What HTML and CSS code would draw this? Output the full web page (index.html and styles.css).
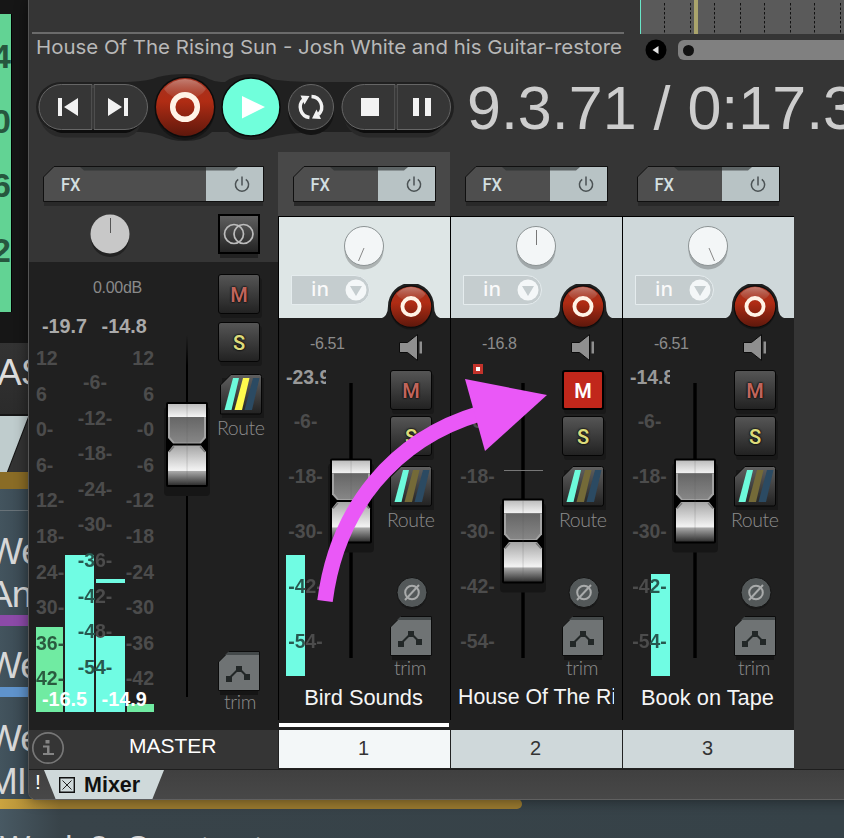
FILE: index.html
```html
<!DOCTYPE html>
<html lang="en">
<head>
<meta charset="utf-8">
<title>Mixer</title>
<link rel="stylesheet" href="styles.css">
</head>
<body>
<svg class="defs" width="0" height="0" aria-hidden="true">
  <defs>
    <linearGradient id="gRed" x1="0" y1="0" x2="0" y2="1"><stop offset="0" stop-color="#a33422"/><stop offset=".4" stop-color="#b02c14"/><stop offset="1" stop-color="#5e180c"/></linearGradient>
    <linearGradient id="gGloss" x1="0" y1="0" x2="0" y2="1"><stop offset="0" stop-color="#c98b80"/><stop offset="1" stop-color="#b05a48" stop-opacity=".3"/></linearGradient>
    <linearGradient id="gBtn" x1="0" y1="0" x2="0" y2="1"><stop offset="0" stop-color="#606060"/><stop offset="1" stop-color="#222"/></linearGradient>
    <linearGradient id="gCapTop" x1="0" y1="0" x2="0" y2="1"><stop offset="0" stop-color="#bdbdbd"/><stop offset="1" stop-color="#f4f4f4"/></linearGradient>
    <linearGradient id="gCapLow" x1="0" y1="0" x2="0" y2="1"><stop offset="0" stop-color="#a5a5a5"/><stop offset=".6" stop-color="#f0f0f0"/><stop offset=".64" stop-color="#f0f0f0"/><stop offset=".65" stop-color="#aaa"/><stop offset="1" stop-color="#303030"/></linearGradient>
    <linearGradient id="gMid" x1="0" y1="0" x2="0" y2="1"><stop offset="0" stop-color="#666"/><stop offset="1" stop-color="#868686"/></linearGradient>
    <linearGradient id="gTrack" x1="0" y1="335" x2="0" y2="365" gradientUnits="userSpaceOnUse"><stop offset="0" stop-color="#000" stop-opacity="0"/><stop offset="1" stop-color="#000"/></linearGradient>
  </defs>
  <symbol id="power" viewBox="0 0 18 18"><path d="M5.2 3.8A6.6 6.6 0 1 0 12.8 3.8M9 1v9" fill="none" stroke="#4b5254" stroke-width="1.5"/></symbol>
  <symbol id="fx" viewBox="0 0 144 41">
    <path d="M1 36h141v4H1z" fill="#292929"/>
    <path d="M.5 35.5V11L11 .5H142.500V35.5z" fill="#4e4e4e" stroke="#101010"/>
    <path d="M85 1h57v34H85z" fill="#b8c3c5"/>
    <path d="M37 1H115L111 4.500H41z" fill="#262b2b" opacity=".62"/>
    <text x="17.500" y="25" font-size="18.5" textLength="19.500" lengthAdjust="spacingAndGlyphs" fill="#d3dfe0" font-family="Roboto, sans-serif" font-weight="500">FX</text>
    <use href="#power" x="112" y="9.500" width="18" height="18"/>
  </symbol>
  <symbol id="knob" viewBox="0 0 42 46"><circle cx="21" cy="25" r="19.500" fill="#000" opacity=".22"/><circle cx="21" cy="21" r="19.500" fill="#f3f6f7" stroke="#8c9394"/></symbol>
  <symbol id="rec" viewBox="0 0 62 66">
    <circle cx="31" cy="34" r="30" fill="#111" opacity=".6"/><circle cx="31" cy="31" r="30.500" fill="#0c0c0c"/>
    <circle cx="31" cy="31" r="29" fill="url(#gRed)"/><path d="M10 13Q19 3 31 3T52 13Q46 23 31 23T10 13z" fill="url(#gGloss)" opacity=".85"/>
    <circle cx="31" cy="31" r="12.300" fill="none" stroke="#fff3e6" stroke-width="5.500"/>
  </symbol>
  <symbol id="route" viewBox="0 0 44 46">
    <path d="M2 4h42v40H2z" fill="#181818"/><path d="M.5 40V11L11 .5H39.500Q41.500.5 41.500 2.500V38Q41.500 40 39.500 40z" fill="url(#gBtn)" stroke="#050505"/>
    <path d="M13 4H19L11.500 36H4.500z" fill="#6dfbdc"/><path class="r2" d="M23 4H29.500L22 36H14.500z"/><path class="r3" d="M33 4H39.500L32 36H24.500z"/>
  </symbol>
  <symbol id="trim" viewBox="0 0 42 44">
    <path d="M2 39h38v5H2z" fill="#151515"/><path d="M.5 39.500V11L11 .5H41.500V39.500z" fill="#6f7374" stroke="#0c0c0c"/><path d="M10 1H41V4H7z" fill="#44494a"/>
    <path d="M11 27.500L21 17.500L29 25.500" stroke="#222727" stroke-width="2" fill="none"/><path d="M8 25h6v6H8zM18 15h6v6h-6zM26 23h6v6h-6z" fill="#222727"/>
  </symbol>
  <symbol id="phase" viewBox="0 0 32 33"><circle cx="16" cy="18" r="14.500" fill="#191919"/><circle cx="16" cy="15.500" r="15" fill="#535859" stroke="#141414"/><circle cx="16" cy="15.500" r="6.800" fill="none" stroke="#a9abab" stroke-width="2"/><path d="M9 23L23 8" stroke="#a9abab" stroke-width="2"/></symbol>
  <symbol id="speaker" viewBox="0 0 24 28"><path d="M.5 8.500H8.500L18.500.5V26.500L8.500 18.500H.5z" fill="#8f8f8f" stroke="#0b0b0b"/><path d="M20.500 7.500h2.500v12h-2.500z" fill="#8f8f8f"/></symbol>
  <symbol id="cap" viewBox="0 0 48 96">
    <rect x="1" y="6" width="46" height="89" rx="4" fill="#161616"/>
    <path d="M5 1H43Q45 1 45 3V84Q45 86 43 86H5Q3 86 3 84V3Q3 1 5 1z" fill="#000"/>
    <path d="M5 3H43V16H5z" fill="url(#gCapTop)"/>
    <path d="M5 16H43V37L38 42.500H10L5 37z" fill="#a2a2a2"/><path d="M7 16H41V36L36.500 41.500H11.500L7 36z" fill="url(#gMid)"/>
    <path d="M10 44.500H38L43 51V84H5V51z" fill="url(#gCapLow)"/><path d="M6 51L11 45.500M42 51L37 45.500" stroke="#777" stroke-width="1.500"/>
    <path d="M23.300 3h1.500v80h-1.500z" fill="#555" opacity=".15"/>
  </symbol>
</svg>

<div class="desktop">
  <div class="ledge">
    <div class="bigmeter"><b>4</b><b>0</b><b>6</b><b>2</b></div>
    <div class="under">AS</div>
    <div class="undertab"></div>
    <div class="ochre"></div>
    <div class="notes">
      <div class="rule"></div>
      <p class="n1">We<br>An</p><div class="purple"></div>
      <p class="n2">We</p><div class="blue"></div>
      <p class="n3">We<br>MI</p>
    </div>
  </div>
  <div class="ochre-long"></div>
  <div class="last">Week 2: Construct</div>
</div>

<main class="window">
  <header class="head">
    <div class="title">
      <svg width="600" height="28"><text x="7" y="21.500" textLength="586" lengthAdjust="spacingAndGlyphs">House Of The Rising Sun - Josh White and his Guitar-restore</text></svg>
    </div>
    <div class="arrange">
      <div class="grid"><svg width="204" height="34"><path d="M24.500 3V34M50.500 3V34M74.500 3V34M100.500 3V34M124.500 3V34M150.500 3V34M174.500 3V34M200.500 3V34" stroke="#111" stroke-dasharray="2.500 2"/><path d="M.5 0V34" stroke="#69e6c8"/><path d="M54 0h4v34h-4z" fill="#aaa46c"/></svg></div>
      <div class="scroll"><svg width="22" height="22"><circle cx="11" cy="11" r="10.500" fill="#000"/><path d="M13.500 7V15L7.500 11z" fill="#e4e4e4"/></svg><div class="bar"><i></i></div></div>
    </div>
  </header>

  <section class="transport">
    <svg class="backdrop" width="424" height="70" viewBox="34 72 424 70"><path d="M61 82H128Q150 81 158 77Q170 74 185 74Q200 74 209 79Q215 82 221 82H225Q236 74 251 74Q262 74 272 79Q285 82 320 82H429A25 25 0 0 1 429 132H320Q285 133 273 137Q262 140 251 140Q238 140 228 132H212Q203 141 185 141Q170 141 162 136Q145 131 128 132H61A25 25 0 0 1 61 82z" fill="#202020"/><path d="M61 132H128L140 126Q136 137 124 137.500H64Q46 137 40 120Q46 132 61 132z" fill="#292929"/><path d="M365 132H428L445 122Q440 137 424 137.500H368Q350 137 344 120Q350 132 365 132z" fill="#292929"/></svg>
    <div class="pill"><svg width="110" height="52"><path d="M23 4H88A23 23 0 0 1 88 49H23A23 23 0 0 1 23 4z" fill="#0d0d0d"/><path d="M23.500 .5H54V45.500H23.500A22.500 22.500 0 0 1 23.500 .5zM56 .5H87A22.500 22.500 0 0 1 87 45.500H56z" fill="#363636" stroke="#666"/><path d="M20 14h4v18h-4zM40 14V32L26 23zM70 14V32L84 23zM86 14h4v18h-4z" fill="#f2f2f2"/></svg></div>
    <svg class="record" width="62" height="66"><use href="#rec"/></svg>
    <svg class="play" width="60" height="60"><circle cx="30" cy="30" r="29" fill="#70ffdb" stroke="#0a0a0a" stroke-width="1.500"/><path d="M21 19V41.500L44 30z" fill="#fff"/></svg>
    <svg class="loop" width="48" height="54"><circle cx="24" cy="29" r="23" fill="#141414"/><circle cx="24" cy="24" r="22.500" fill="#363636" stroke="#666"/><g fill="none" stroke="#f2f2f2" stroke-width="3.400"><path d="M24.500 13.500A10.500 10.500 0 0 1 31.500 31.500M22.500 34.500A10.500 10.500 0 0 1 16.500 16.500"/></g><path d="M13.500 12.500L22.500 13L17.500 21.500zM34 36L25 35.500L29.500 26.500z" fill="#f2f2f2"/></svg>
    <div class="pill p2"><svg width="110" height="52"><path d="M23 4H88A23 23 0 0 1 88 49H23A23 23 0 0 1 23 4z" fill="#0d0d0d"/><path d="M23.500 .5H54V45.500H23.500A22.500 22.500 0 0 1 23.500 .5zM56 .5H87A22.500 22.500 0 0 1 87 45.500H56z" fill="#363636" stroke="#666"/><path d="M20 14h18v18H20zM72 14h6v18h-6zM84 14h6v18h-6z" fill="#f2f2f2"/></svg></div>
    <div class="time">9.3.71 / 0:17.3</div>
  </section>

  <section class="mixer">
    <div class="master">
      <div class="m-head">
        <svg class="m-fx" width="222" height="41"><path d="M1 36h219v4H1z" fill="#292929"/><path d="M.5 35.500V11L11 .5H220.500V35.500z" fill="#4e4e4e" stroke="#101010"/><path d="M163 1h57v34h-57z" fill="#b8c3c5"/><path d="M37 1H195L191 4.500H41z" fill="#262b2b" opacity=".62"/><text x="18" y="25" font-size="18.500" textLength="19.500" lengthAdjust="spacingAndGlyphs" fill="#d3dfe0" font-family="Roboto, sans-serif" font-weight="500">FX</text><use href="#power" x="190" y="9.500" width="18" height="18"/></svg>
        <div class="m-pan">
          <svg width="42" height="46"><circle cx="21" cy="24" r="19" fill="#222"/><circle cx="21" cy="20" r="19.500" fill="#c8c8c8"/><path d="M21.500 4V19" stroke="#555"/></svg>
          <svg class="stereo" width="42" height="46"><path d="M2 6h38v38H2z" fill="#222"/><rect x="1" y="1" width="40" height="38" fill="url(#gBtn)" stroke="#000" stroke-width="2"/><g fill="none" stroke="#bcbcbc" stroke-width="1.700"><circle cx="16" cy="20" r="9.500"/><circle cx="25.500" cy="20" r="9.500"/></g></svg>
        </div>
      </div>
      <div class="m-body">
        <div class="m-left">
          <div class="m-db">0.00dB</div>
          <div class="m-peaks"><span>-19.7</span><span>-14.8</span></div>
          <div class="m-meter">
            <i class="bar1"></i><i class="bar2"></i><i class="bar3"></i><i class="bar4"></i><i class="hold"></i>
            <div class="sc sl"><span>12</span><span>6</span><span>0-</span><span>6-</span><span>12-</span><span>18-</span><span>24-</span><span>30-</span><span class="g1">36-</span><span class="g1">42-</span></div>
            <div class="sc sm"><span>-6-</span><span>-12-</span><span>-18-</span><span>-24-</span><span>-30-</span><span class="g2">-36-</span><span class="g2">-42-</span><span class="g2">-48-</span><span class="g3">-54-</span></div>
            <div class="sc sr"><span>12</span><span>6</span><span>-0</span><span>-6</span><span>-12</span><span>-18</span><span>-24</span><span>-30</span><span>-36</span><span>-42</span></div>
            <div class="rms"><span>-16.5</span><span>-14.9</span></div>
          </div>
        </div>
        <svg class="m-fader" width="48" height="380" viewBox="163 325 48 380"><path d="M186 335h2V697h-2z" fill="url(#gTrack)"/><use href="#cap" x="163" y="401" width="48" height="96"/></svg>
        <div class="m-btns">
          <div class="btn mute">M</div><div class="btn solo">S</div>
          <svg class="rt on" width="44" height="46"><use href="#route"/></svg><div class="lab">Route</div>
          <svg class="tr" width="42" height="44"><use href="#trim"/></svg><div class="lab tl">trim</div>
        </div>
      </div>
      <div class="m-foot"><svg width="34" height="34"><circle cx="17" cy="17" r="15.200" fill="none" stroke="#777" stroke-width="1.700"/><path d="M14.500 9h4v3.500h-4zM12 14.500h6.500V22H23v2H12v-2h4v-5.500h-4z" fill="#858585"/></svg><span>MASTER</span></div>
    </div>

    <div class="channel selected">
      <div class="fx"><svg width="144" height="41"><use href="#fx"/></svg></div>
      <div class="input">
        <svg class="knob" width="42" height="46"><use href="#knob"/><path d="M21 23L15.500 36" stroke="#888"/></svg>
        <div class="in"><span>in</span><svg width="22" height="22"><circle cx="11" cy="11" r="10.500" fill="#f4f7f8"/><path d="M5 7H17L11 17z" fill="#c5cdcf"/></svg></div>
        <svg class="arm" width="62" height="48"><path d="M0 35Q8 33 8 22A23 23 0 0 1 54 22Q54 33 62 35z" fill="#202020"/><use href="#rec" x="9" y="1" width="44" height="46"/></svg>
      </div>
      <div class="strip">
        <div class="left">
          <div class="vol">-6.51</div>
          <div class="meter"><i class="lv l1"></i>
            <div class="scale"><div class="peak">-23.9</div><span>-6-</span><span>-18-</span><span>-30-</span><span class="c1">-42-</span><span class="c1">-54-</span></div>
            <svg width="48" height="300" viewBox="327 369 48 300"><path d="M349.300 383h3.400V658h-3.400z" fill="#000"/><use href="#cap" x="327" y="457.500" width="48" height="96"/></svg>
          </div>
        </div>
        <div class="btns"><svg class="sp" width="24" height="28"><use href="#speaker"/></svg><div class="btn mute">M</div><div class="btn solo">S</div><svg class="rt sq" width="44" height="46"><use href="#route"/></svg><div class="lab">Route</div><svg class="ph" width="32" height="33"><use href="#phase"/></svg><svg class="tr" width="42" height="44"><use href="#trim"/></svg><div class="lab tl">trim</div></div>
      </div>
      <div class="name"><span>Bird Sounds</span></div>
      <div class="mark"></div>
      <div class="num">1</div>
    </div>

    <div class="channel">
      <div class="fx"><svg width="144" height="41"><use href="#fx"/></svg></div>
      <div class="input">
        <svg class="knob" width="42" height="46"><use href="#knob"/><path d="M21.500 5V20" stroke="#777"/></svg>
        <div class="in"><span>in</span><svg width="22" height="22"><circle cx="11" cy="11" r="10.500" fill="#f4f7f8"/><path d="M5 7H17L11 17z" fill="#c5cdcf"/></svg></div>
        <svg class="arm" width="62" height="48"><path d="M0 35Q8 33 8 22A23 23 0 0 1 54 22Q54 33 62 35z" fill="#202020"/><use href="#rec" x="9" y="1" width="44" height="46"/></svg>
      </div>
      <div class="strip">
        <div class="left">
          <div class="vol">-16.8</div>
          <div class="meter"><i class="clip"></i>
            <div class="scale"><div class="peak"></div><span>-6-</span><span>-18-</span><span>-30-</span><span>-42-</span><span>-54-</span></div>
            <svg width="48" height="300" viewBox="327 369 48 300"><path d="M349.300 383h3.400V658h-3.400z" fill="#000"/><path d="M332 470.500h39" stroke="#777"/><use href="#cap" x="327" y="497.500" width="48" height="96"/></svg>
          </div>
        </div>
        <div class="btns"><svg class="sp" width="24" height="28"><use href="#speaker"/></svg><div class="btn mute lit">M</div><div class="btn solo">S</div><svg class="rt" width="44" height="46"><use href="#route"/></svg><div class="lab">Route</div><svg class="ph" width="32" height="33"><use href="#phase"/></svg><svg class="tr" width="42" height="44"><use href="#trim"/></svg><div class="lab tl">trim</div></div>
      </div>
      <div class="name long"><span>House Of The Rising</span></div>
      <div class="mark"></div>
      <div class="num">2</div>
    </div>

    <div class="channel">
      <div class="fx"><svg width="144" height="41"><use href="#fx"/></svg></div>
      <div class="input">
        <svg class="knob" width="42" height="46"><use href="#knob"/><path d="M22 23L27.500 36" stroke="#888"/></svg>
        <div class="in"><span>in</span><svg width="22" height="22"><circle cx="11" cy="11" r="10.500" fill="#f4f7f8"/><path d="M5 7H17L11 17z" fill="#c5cdcf"/></svg></div>
        <svg class="arm" width="62" height="48"><path d="M0 35Q8 33 8 22A23 23 0 0 1 54 22Q54 33 62 35z" fill="#202020"/><use href="#rec" x="9" y="1" width="44" height="46"/></svg>
      </div>
      <div class="strip">
        <div class="left">
          <div class="vol">-6.51</div>
          <div class="meter"><i class="lv l3"></i>
            <div class="scale"><div class="peak">-14.8</div><span>-6-</span><span>-18-</span><span>-30-</span><span class="c3">-42-</span><span class="c3">-54-</span></div>
            <svg width="48" height="300" viewBox="327 369 48 300"><path d="M349.300 383h3.400V658h-3.400z" fill="#000"/><use href="#cap" x="327" y="457.500" width="48" height="96"/></svg>
          </div>
        </div>
        <div class="btns"><svg class="sp" width="24" height="28"><use href="#speaker"/></svg><div class="btn mute">M</div><div class="btn solo">S</div><svg class="rt" width="44" height="46"><use href="#route"/></svg><div class="lab">Route</div><svg class="ph" width="32" height="33"><use href="#phase"/></svg><svg class="tr" width="42" height="44"><use href="#trim"/></svg><div class="lab tl">trim</div></div>
      </div>
      <div class="name"><span>Book on Tape</span></div>
      <div class="mark"></div>
      <div class="num">3</div>
    </div>
  </section>

  <footer class="tabs"><span class="bang">!</span><div class="tab"><svg width="16" height="16"><path d="M.7.7H15.300V15.300H.7z" fill="none" stroke="#111" stroke-width="1.400"/><path d="M3.500 3.500l9 9M12.500 3.500l-9 9" stroke="#222"/></svg><b>Mixer</b></div></footer>
</main>
<svg class="arrow" width="844" height="838"><path d="M325 601C337 508 394 439 480 413.500" fill="none" stroke="#ea58f7" stroke-width="15.500"/><path d="M465 379L547 395L485 451z" fill="#ea58f7"/></svg>
</body>
</html>
```
FILE: styles.css
```css
* { box-sizing: border-box; }
body { margin: 0; width: 844px; height: 838px; overflow: hidden; position: relative; background: #384349; font-family: "Liberation Sans", sans-serif; }
svg { display: block; flex: none; }
.defs { position: absolute; }

/* content behind the window */
.desktop { width: 844px; height: 838px; overflow: hidden; background: linear-gradient(90deg, #485963, #384349 60px, #364248); display: flex; flex-direction: column; }
.ledge { width: 40px; height: 799px; flex: none; background: #161616; overflow: hidden; display: flex; flex-direction: column; }
.bigmeter { width: 12px; height: 298px; margin-top: 14px; flex: none; background: #62d394; border-right: 1px solid #000; padding-top: 10px; display: flex; flex-direction: column; align-items: flex-end; overflow: hidden; }
.bigmeter b { height: 64.500px; font-size: 34px; line-height: 64.500px; color: #27563e; }
.under { height: 71px; margin-top: 31px; flex: none; background: linear-gradient(#333, #2b2b2b); color: #ddd; font-size: 37px; line-height: 59px; letter-spacing: -1px; text-indent: -3px; }
.undertab { height: 56px; flex: none; margin-top: 2px; background: linear-gradient(111deg, #bfcccd 26px, #111 27px, #333 28px); }
.ochre { height: 17px; flex: none; background: #8a6c26; }
.notes { flex: 1; background: linear-gradient(90deg, #43545e, #35434c); color: #d8d8d8; font-size: 37px; line-height: 43px; }
.notes p { margin: 0 0 0 -13px; letter-spacing: -1px; white-space: nowrap; }
.rule { height: 22px; border-bottom: 1px solid #687278; }
.notes .n1 { padding-top: 19px; height: 104px; margin-left: -12px; }
.purple { height: 11px; background: #8c4aa8; }
.n2 { padding-top: 18px; height: 61px; }
.blue { height: 10px; background: #5f93cc; }
.n3 { padding-top: 20px; }
.ochre-long { width: 522px; height: 10px; flex: none; border-radius: 0 5px 5px 0; background: linear-gradient(90deg, #cba440, #99792f 60px); }
.last { color: #d5d5d5; font-size: 32px; line-height: 34px; margin-top: 21px; white-space: nowrap; }

.window { position: absolute; left: 28px; top: 0; width: 830px; height: 800px; background: #353535; border-left: 1px solid #555; border-bottom: 1px solid #606060; border-radius: 0 0 0 8px; overflow: hidden; display: flex; flex-direction: column; box-shadow: 0 0 14px rgba(0,0,0,.45); }
.head { height: 70px; flex: none; display: flex; }
.title { width: 611px; padding: 32px 0 0 0; }
.title::before { content: ""; display: block; width: 592px; height: 2px; margin-left: 3px; background: #6b6b6b; margin-bottom: -2px; }
.title text { font-family: Inter, sans-serif; font-size: 19.300px; font-weight: 400; fill: #b8b8b8; }
.arrange { width: 204px; }
.grid { height: 34px; background: #5a5a5a; }
.scroll { display: flex; align-items: center; height: 32px; padding-left: 5px; gap: 11px; }
.bar { flex: 1; height: 20px; border-radius: 6px 0 0 6px; background: #808080; display: flex; align-items: center; padding-left: 5px; }
.bar i { width: 11px; height: 11px; border-radius: 50%; background: #111; }

.transport { position: relative; height: 82px; flex: none; display: flex; padding-left: 9px; }
.backdrop { position: absolute; left: 5px; top: 2px; }
.transport > *:not(.backdrop) { position: relative; }
.pill { margin-top: 14px; }
.record { margin: 6px 0 0 6px; }
.play { margin: 7px 0 0 5px; }
.loop { margin: 13px 0 0 6px; }
.p2 { margin-left: 6px; }
.time { margin-left: 16px; margin-top: 3px; font-size: 61px; line-height: 70px; color: #cdcdcd; white-space: nowrap; }

.mixer { display: flex; height: 617px; flex: none; }
.master { width: 249px; display: flex; flex-direction: column; }
.m-head { height: 110px; padding: 14px 0 0 14px; }
.m-pan { display: flex; justify-content: space-between; padding: 7px 18px 0 46px; }
.m-body { height: 468px; background: #202020; display: flex; }
.m-left { width: 134px; flex: none; }
.m-db { height: 50px; padding: 0 0 0 64px; font-size: 16px; line-height: 51px; color: #8a8a8a; letter-spacing: -.3px; }
.m-peaks, .rms { display: flex; gap: 14.500px; padding-left: 13px; font-size: 19.800px; line-height: 29px; height: 28px; font-weight: bold; color: #aaa; white-space: nowrap; }
.m-meter { position: relative; display: flex; height: 372px; }
.m-meter > i { position: absolute; }
.bar1 { left: 7px; width: 27px; top: 287px; height: 85px; background: #70eba2; }
.bar2 { left: 36px; width: 29px; top: 215px; height: 157px; background: #70fce3; }
.bar3 { left: 67px; width: 29px; top: 296px; height: 76px; background: #70fce3; }
.bar4 { left: 98px; width: 27px; top: 364px; height: 8px; background: #70eba2; }
.hold { left: 67px; width: 29px; top: 239px; height: 4px; background: #70fce3; }
.sc { position: relative; display: flex; flex-direction: column; font-size: 19.500px; font-weight: bold; color: #4c4c4c; }
.sc span { height: 35.600px; line-height: 36.600px; white-space: nowrap; }
.sl { width: 30px; padding-left: 7px; }
.sm { width: 60px; padding-top: 24px; align-items: center; margin-left: 6px; }
.sr { width: 29px; align-items: flex-end; }
.sc .g1, .sc .g2, .scale .c1, .scale .c3 { color: transparent; -webkit-background-clip: text; background-clip: text; }
.sc .g1 { background-image: linear-gradient(90deg, #2a5b3f 27px, #3c3c3c 27px); width: 30px; }
.sc .g2 { background-image: linear-gradient(90deg, #27584f 17px, #4c4c4c 17px); }
.sc .g3 { color: #27584f; }
.rms { position: absolute; left: 0; bottom: -1px; color: #fff; }
.m-fader { margin-top: 63px; }
.m-btns { width: 60px; padding: 12px 0 0 7px; }
.m-btns .solo { margin-top: 8px; }
.m-btns .rt { margin: 12px 0 0 2px; }
.m-btns .tr { margin-top: 211px; }
.m-foot { height: 39px; background: #353535; display: flex; align-items: center; padding: 0 0 4px 2px; color: #fff; font-size: 21px; }
.m-foot span { margin-left: 64px; margin-top: -3px; }

.btn { width: 42px; height: 40px; border: 1px solid #050505; border-radius: 3px; background: linear-gradient(#555, #222); box-shadow: 2px 4px 0 #191919; text-align: center; font: 600 20px/40px Roboto, sans-serif; text-shadow: 0 0 2px #000, 0 0 2px #000; }
.mute { color: #bf655b; }
.solo { color: #dcdb7b; margin-top: 6px; }
.lit { background: #c1271b; color: #fff; border: 2px solid #000; line-height: 38px; text-shadow: none; }
.rt { margin-top: 10px; }
.r2 { fill: var(--mid, #746a38); }
.r3 { fill: #2b4a62; }
.on { --mid: #fffb4d; }
.lab { width: 46px; margin-left: -3px; margin-top: -4px; font: 300 19.500px/24px Lato, sans-serif; color: #8c8c8c; text-align: center; white-space: nowrap; letter-spacing: -.4px; }
.m-btns .lab { margin-left: -1px; }

.channel { width: 172px; flex: none; display: flex; flex-direction: column; background: #202020; }
.fx { height: 64px; padding: 14px 0 0 15px; background: #353535; }
.selected .fx { background: #484848; }
.input { position: relative; height: 102px; border-top: 1px solid #000; border-left: 1px solid #000; background: #cfd8da; padding: 8px 0 0 12px; }
.selected .input { background: #dee6e6; }
.knob { margin-left: 52px; }
.in { width: 79px; height: 30px; margin-top: 4px; border: 1.500px solid #e5ecee; border-radius: 0 15px 15px 0; background: #c5cdcf; display: flex; align-items: center; padding-left: 19px; gap: 17px; color: #fafafa; font: 500 20px/24px "Noto Sans", sans-serif; }
.in span { width: 17px; margin-top: -2px; }
.arm { position: absolute; left: 101px; top: 67px; }
.strip { height: 370px; border-left: 1px solid #000; display: flex; }
.left { width: 111px; flex: none; }
.vol { height: 51px; padding-left: 31px; font-size: 16px; line-height: 51px; letter-spacing: -.4px; color: #8c8c8c; }
.meter { position: relative; display: flex; height: 300px; }
.meter > i { position: absolute; }
.meter > svg { position: relative; }
.lv { background: #70fce3; width: 19px; }
.l1 { left: 7px; top: 186px; height: 121px; }
.l3 { left: 28px; top: 205px; height: 102px; }
.clip { left: 22px; top: -5px; width: 10px; height: 10px; background: #fff; border: 3px solid #c3332b; }
.scale { position: relative; width: 48px; display: flex; flex-direction: column; align-items: center; font-size: 19.400px; font-weight: bold; color: #4c4c4c; padding-left: 7px; }
.scale span { line-height: 57px; height: 55px; margin-right: 2px; }
.peak { align-self: flex-start; width: 40px; height: 24.500px; line-height: 17px; overflow: hidden; color: #999; white-space: nowrap; }
.scale .c1 { background-image: linear-gradient(90deg, #27584f 16px, #4c4c4c 16px); }
.scale .c3 { background-image: linear-gradient(90deg, #4c4c4c 18px, #27584f 18px); }
.btns { width: 60px; padding-top: 16px; }
.sp { margin-left: 9px; }
.btns .mute { margin-top: 8px; }
.btns .ph { margin: 45px 0 0 6px; }
.btns .tr { margin-top: 6px; }
.btns .tl { margin-top: -4px; }
.m-btns .tl { margin-top: -5px; }
.name { height: 33px; border-left: 1px solid #000; padding: 0 8px 0 6px; font-size: 21.800px; line-height: 21px; color: #f5f5f5; text-align: center; white-space: nowrap; }
.name span { display: block; overflow: hidden; height: 25px; }
.long { font-size: 21.300px; padding-left: 7px; }
.long span { text-align: left; }
.mark { height: 6px; margin: 3px 1px 1px 1px; border-bottom: 2px solid #202020; }
.selected .mark { background: #fff; }
.num { height: 39px; border: solid #222; border-width: 0 0 1px 1px; background: #cfd8da; color: #333; text-align: center; font: 20px/37px "Liberation Sans", sans-serif; padding-right: 2px; }
.selected .num { background: #f3f7f8; }

.tabs { height: 31px; background: linear-gradient(#404040, #484848); border-top: 1px solid #1e1e1e; display: flex; }
.bang { width: 15px; padding-left: 6px; font-size: 21px; line-height: 24px; color: #fff; }
.tab { width: 120px; height: 30px; background: #cfd9da; clip-path: polygon(0 0, 100% 0, 108px 100%, 12px 100%); display: flex; align-items: center; padding-left: 15px; gap: 9px; color: #111; font-size: 21.500px; }
.arrow { position: absolute; left: 0; top: 0; }
```
